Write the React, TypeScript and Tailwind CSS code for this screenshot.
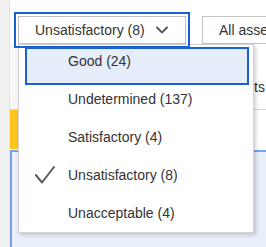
import React from "react";

const items = [
  { label: "Good (24)", focused: true, checked: false },
  { label: "Undetermined (137)", focused: false, checked: false },
  { label: "Satisfactory (4)", focused: false, checked: false },
  { label: "Unsatisfactory (8)", focused: false, checked: true },
  { label: "Unacceptable (4)", focused: false, checked: false },
];

export default function App() {
  return (
    <div className="w-[266px] h-[247px] relative overflow-hidden bg-white flex font-['Liberation_Sans',Arial,sans-serif] text-[14px] text-[#333333]">
      <div className="w-[10px] shrink-0 bg-[#f1f1f1] border-r border-[#e4e4e4]" />
      <div className="flex-1 flex flex-col min-w-0">
        <div className="h-[44px] shrink-0 flex items-start pt-[16px] pl-[8px] gap-[16px]">
          <button className="relative z-20 w-[168px] h-[28px] shrink-0 flex items-center justify-between pl-[16px] pr-[17px] bg-white border border-[#bdbdbd] outline-2 outline-offset-2 outline-[#1b5fd6] leading-[20px] text-[#333333]">
            <span className="whitespace-nowrap">Unsatisfactory (8)</span>
            <svg width="12" height="8" viewBox="0 0 12 8" fill="none">
              <path d="M1 1.5 L6 6.5 L11 1.5" stroke="#555555" strokeWidth="1.8" strokeLinecap="round" strokeLinejoin="round" />
            </svg>
          </button>
          <button className="w-[100px] h-[28px] shrink-0 flex items-center pl-[16px] bg-white border border-[#c4c4c4] leading-[20px] whitespace-nowrap text-[#333333]">
            All assets
          </button>
        </div>
        <div className="h-[66px] shrink-0 flex border-b border-[#d6d6d6]">
          <div className="w-[8px] shrink-0 bg-[#f7f7f7]" />
          <div className="flex-1 pt-[33px] pl-[205px] leading-[20px] whitespace-nowrap">Assets</div>
        </div>
        <div className="h-[40px] shrink-0 flex">
          <div className="w-[8px] h-[39px] shrink-0 bg-[#fcc51c]" />
          <div className="flex-1" />
        </div>
        <div className="flex-1 bg-[#e8eefa] border-t-2 border-l-2 border-[#7aa0ec]" />
      </div>

      <div className="absolute left-[18px] top-[44px] z-10 w-[236px] h-[189px] overflow-hidden bg-white border border-[#d2d2d2] shadow-[2px_2px_4px_rgba(0,0,0,0.18)] pt-[2px] pl-[6px] pr-[4px]">
        {items.map((it) => (
          <div
            key={it.label}
            className={
              it.focused
                ? "h-[38px] flex items-start pt-[2px] pl-[8px] border-2 border-[#1b5fd6] bg-[#e6edfa]"
                : "h-[38px] flex items-start pt-[2px] pl-[8px] border-2 border-transparent"
            }
          >
            <div className="w-[33px] h-[20px] shrink-0 relative">
              {it.checked && (
                <svg className="absolute left-0 top-0" width="20" height="20" viewBox="0 0 20 20" fill="none">
                  <path d="M0.8 10 L7 17.5 L19 2" stroke="#5a5a5a" strokeWidth="2" strokeLinecap="round" strokeLinejoin="round" />
                </svg>
              )}
            </div>
            <span className="leading-[20px] whitespace-nowrap text-[#333333]">{it.label}</span>
          </div>
        ))}
      </div>
    </div>
  );
}
